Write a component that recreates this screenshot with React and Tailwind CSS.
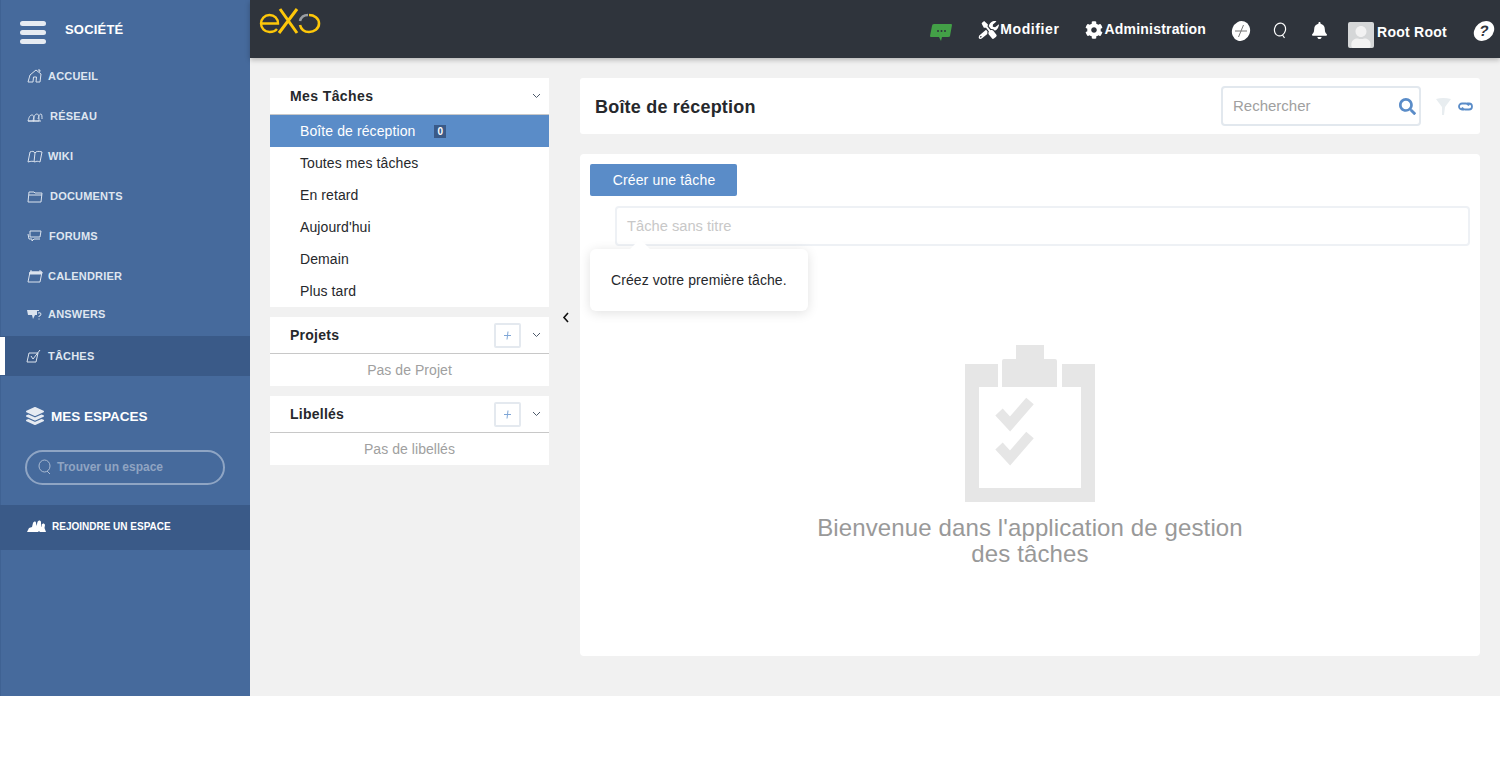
import { FaBell, FaCog, FaLayerGroup, FaSearch, FaTools, FaUser } from "react-icons/fa"

const Outline = ({ children, w = 16, h = 14 }) => (
  <svg width={w} height={h} viewBox="0 0 16 14" fill="none" stroke="currentColor" strokeWidth="1">
    {children}
  </svg>
)

const navItems = [
  {
    label: "ACCUEIL",
    gap: "gap-[5px]",
    icon: (
      <Outline>
        <path d="M1 13 3 6l6-5 5 4-1 8H9l.5-5h-3L6 13zM11 1h2l-.3 2" />
      </Outline>
    ),
  },
  {
    label: "RÉSEAU",
    gap: "gap-[7px]",
    icon: (
      <Outline w={16}>
        <path d="M1 12c1-4 2-6 4-6s2 3 2 6zM6 12c1-5 2-7 4-7s2 4 2 7zM11 10c1-4 2-5 3-5s1 3 1 5M1 12h13" />
      </Outline>
    ),
  },
  {
    label: "WIKI",
    gap: "gap-[5px]",
    icon: (
      <Outline>
        <path d="M1 13 3 3c2-1 4-1 5 1 1-2 4-2 7-1l-2 10c-2-1-4-1-5 0-2-1-4-1-7 0zM8 4l-1 9" />
      </Outline>
    ),
  },
  {
    label: "DOCUMENTS",
    gap: "gap-[7px]",
    icon: (
      <Outline>
        <path d="M1 13 2 3h5l1 1h7l-1 9zM2 6h13" />
      </Outline>
    ),
  },
  {
    label: "FORUMS",
    gap: "gap-[6px]",
    icon: (
      <Outline>
        <path d="M3 2h11l-1 6H3zM1 5l1 5h3v2l2-2h6" />
      </Outline>
    ),
  },
  {
    label: "CALENDRIER",
    gap: "gap-[5px]",
    icon: (
      <Outline>
        <path d="M1 13 3 3h12l-2 10zM4 1v2M13 1v2" />
        <path d="M3 3h12l-.5 2H2.600z" fill="currentColor" />
      </Outline>
    ),
  },
  {
    label: "ANSWERS",
    gap: "gap-[5px]",
    shift: "pb-[4px]",
    icon: (
      <svg width="16" height="11" viewBox="0 0 16 11" fill="currentColor">
        <path d="M0 1h12v1H10v4H8L6 10 5 6H1z" />
        <path d="M11 4q3-1 3 1t-2 2v1M12 9.500v1" fill="none" stroke="currentColor" />
      </svg>
    ),
  },
]

function SideRow({ item }) {
  return (
    <div className={`flex h-[40px] items-center pl-[26px] ${item.gap} ${item.shift || ""}`}>
      <span className="flex w-[16px] text-[#dbe3ee]">{item.icon}</span>
      <span className="pt-[1px] text-[11px] font-bold tracking-[0.2px] text-[#dfe6f0]">{item.label}</span>
    </div>
  )
}

function Sidebar() {
  return (
    <aside className="flex h-[696px] w-[250px] shrink-0 flex-col border-l border-[#3f6293] bg-[#466a9c]">
      <div className="flex h-[56px] items-start pl-[19px] pt-[20px]">
        <div className="flex w-[26px] flex-col gap-[4px] pt-[1px]">
          <div className="h-[5px] rounded-full bg-[#e6ebf2]"></div>
          <div className="h-[5px] rounded-full bg-[#e6ebf2]"></div>
          <div className="h-[5px] rounded-full bg-[#e6ebf2]"></div>
        </div>
        <span className="ml-[19px] text-[13px] leading-[20px] font-bold tracking-[0.2px] text-white">SOCIÉTÉ</span>
      </div>
      {navItems.map((item) => (
        <SideRow key={item.label} item={item} />
      ))}
      <div className="-ml-px flex h-[40px] items-center bg-[#3a5a88]">
        <div className="h-[38px] w-[5px] bg-white"></div>
        <div className="ml-[21px] flex items-center gap-[6px]">
          <svg width="16" height="14" viewBox="0 0 16 14" fill="none" stroke="#dbe3ee" strokeWidth="1">
            <path d="M1 13 3 4h9l-2 9zM5 7l2 3 7-9" />
          </svg>
          <span className="text-[11px] font-bold tracking-[0.2px] text-[#dfe6f0]">TÂCHES</span>
        </div>
      </div>
      <div className="flex h-[74px] items-center gap-[7px] pt-[8px] pl-[25px]">
        <FaLayerGroup className="-translate-y-[1px] text-[18px] text-[#e6ebf2]" />
        <span className="text-[13.500px] font-bold text-white">MES ESPACES</span>
      </div>
      <div className="ml-[24px] flex h-[35px] w-[200px] items-center gap-[5px] rounded-full border-2 border-[#8fa5c4] pb-[1px] pl-[10px]">
        <svg width="15" height="16" viewBox="0 0 15 16" fill="none" stroke="#a9bad2" strokeWidth="1">
          <ellipse cx="7.500" cy="7" rx="5.500" ry="6" />
          <path d="m10 12 3 3" />
        </svg>
        <span className="text-[12px] font-bold text-[#90a4c2]">Trouver un espace</span>
      </div>
      <div className="mt-[20px] -ml-px flex h-[45px] items-center gap-[5px] bg-[#3a5a88] pb-[3px] pl-[27px]">
        <svg width="20" height="12" viewBox="0 0 20 12" fill="white">
          <path d="M0 12 2 8l3-1 1-4c1-2 3-2 3 0l.5 3 1-4c1-2 3-2 3.500 0v4l1 1-.5-2c1-2 3-2 3.500 0l-.5 3 1.500 4H13l-1-1-1 1z" />
        </svg>
        <span className="text-[10px] font-bold text-white">REJOINDRE UN ESPACE</span>
      </div>
    </aside>
  )
}

function Logo() {
  return (
    <svg width="62" height="26" viewBox="0 0 62 26" fill="none">
      <path
        d="M2 15.500h17c0-5-3.500-8.500-8.500-8.500S2 11 2 15.500 5.500 24 10.500 24c3 0 6-1 7.500-3"
        stroke="#fdc70a"
        strokeWidth="2.400"
      />
      <path d="m21 1 17 24M38 1 20 25" stroke="#fdc70a" strokeWidth="3" />
      <path d="M41 13c1-4 4-6 8-6" stroke="#9a9ea3" strokeWidth="2.600" />
      <path d="M50 7c5 0 10 3 10 8.500S55 24 50 24s-8-3-9-7" stroke="#fdc70a" strokeWidth="2.600" />
    </svg>
  )
}

function TopBar() {
  return (
    <header className="relative z-10 flex h-[58px] shrink-0 bg-[#2f343c] shadow-[0_2px_5px_rgba(0,0,0,0.25)]">
      <div className="ml-[9px] pt-[8px]">
        <Logo />
      </div>
      <div className="ml-auto flex items-start text-[14px] font-bold tracking-[0.25px] text-white">
        <svg className="mt-[24px]" width="22" height="18" viewBox="0 0 22 18" fill="#43a047">
          <path d="M4 0h17q1 0 1 1l-2 11q0 1-2 1h-6l-1 4-2-4H1q-1 0-1-1L2 2q0-2 2-2z" />
          <circle cx="8" cy="7" r="1" fill="#2f343c" />
          <circle cx="11.500" cy="7" r="1" fill="#2f343c" />
          <circle cx="15" cy="7" r="1" fill="#2f343c" />
        </svg>
        <FaTools className="mt-[21px] ml-[28px] -skew-x-12 text-[18px]" />
        <span className="mt-[21px] ml-[2px] leading-[17px] tracking-[0.6px]">Modifier</span>
        <FaCog className="mt-[21px] ml-[25px] text-[18px]" />
        <span className="mt-[21px] ml-[2px] leading-[17px] tracking-[0.2px]">Administration</span>
        <svg className="mt-[21px] ml-[25px]" width="20" height="20" viewBox="0 0 20 20">
          <ellipse cx="10" cy="10" rx="9" ry="10" fill="white" transform="rotate(20 10 10)" />
          <path d="M4 10h12M12.500 4l-5 12" stroke="#777" strokeWidth="1" />
        </svg>
        <svg className="mt-[22px] ml-[21px]" width="16" height="17" viewBox="0 0 16 17" fill="none" stroke="white" strokeWidth="1.200">
          <ellipse cx="8" cy="7.500" rx="5.500" ry="6.500" transform="rotate(15 8 7.500)" />
          <path d="m10.500 13 2 3" />
        </svg>
        <FaBell className="mt-[22px] ml-[23px] text-[17px]" />
        <div className="mt-[22px] ml-[20px] flex h-[26px] w-[26px] items-end justify-center overflow-hidden rounded-[2px] bg-[#d5d7d8]">
          <FaUser className="text-[22px] text-[#f2f2f2]" />
        </div>
        <span className="mt-[24px] ml-[3px] leading-[17px]">Root Root</span>
        <div className="mt-[21px] mr-[6px] ml-[27px] flex h-[20px] w-[20px] -skew-x-12 items-center justify-center rounded-full bg-white text-[15px] font-bold text-[#2f343c]">
          ?
        </div>
      </div>
    </header>
  )
}

const Chevron = () => (
  <svg width="9" height="6" viewBox="0 0 9 6" fill="none" stroke="#4d5a6b" strokeWidth="1">
    <path d="m1 1 3.500 3.500L8 1" />
  </svg>
)

const taskFilters = ["Toutes mes tâches", "En retard", "Aujourd'hui", "Demain", "Plus tard"]

function LeftPanel() {
  return (
    <div className="flex w-[279px] shrink-0 flex-col gap-[10px]">
      <div className="bg-white">
        <div className="flex h-[37px] items-center justify-between border-b border-[#c8c8c8] pr-[8px] pl-[20px]">
          <span className="text-[14px] font-bold tracking-[0.4px] text-[#26282c]">Mes Tâches</span>
          <Chevron />
        </div>
        <div className="flex h-[32px] items-center bg-[#5a8cc8] pl-[30px] text-[14px] tracking-[0.1px] text-white">
          Boîte de réception
          <span className="ml-[19px] flex h-[13px] w-[12px] items-center justify-center bg-[#3a5a88] text-[10px] font-bold">
            0
          </span>
        </div>
        {taskFilters.map((name) => (
          <div key={name} className="flex h-[32px] items-center pl-[30px] text-[14px] tracking-[0.1px] text-[#26282c]">
            {name}
          </div>
        ))}
      </div>
      <SideSection title="Projets" empty="Pas de Projet" />
      <SideSection title="Libellés" empty="Pas de libellés" />
    </div>
  )
}

function SideSection({ title, empty }) {
  return (
    <div className="bg-white">
      <div className="flex h-[37px] items-center border-b border-[#c8c8c8] pr-[8px] pl-[20px]">
        <span className="text-[14px] font-bold tracking-[0.25px] text-[#26282c]">{title}</span>
        <div className="mr-[11px] ml-auto flex h-[25px] w-[27px] items-center justify-center rounded-[2px] border-2 border-[#e4e9ef]">
          <svg width="9" height="9" viewBox="0 0 9 9" fill="none" stroke="#7fa6d6" strokeWidth="1">
            <path d="M1 4.500h7M5 .5l-1 8" />
          </svg>
        </div>
        <Chevron />
      </div>
      <div className="flex h-[32px] items-center justify-center text-[14px] tracking-[0.05px] text-[#a0a0a0]">{empty}</div>
    </div>
  )
}

function Clipboard() {
  return (
    <svg width="130" height="157" viewBox="0 0 130 157" fill="#e6e6e6">
      <path d="M0 19h33v23h64V19h33v138H0zM14 42v101h102V42z" fillRule="evenodd" />
      <path d="M51 0h28v14h11q2 0 2 2v26H37V16q0-2 2-2h12z" />
      <path d="m34 67 11 12 20-23M34 101l11 12 20-23" fill="none" stroke="#e6e6e6" strokeWidth="10" />
    </svg>
  )
}

function MainPanel() {
  return (
    <div className="flex flex-1 flex-col gap-[20px]">
      <div className="flex h-[56px] items-center rounded-[3px] bg-white pl-[15px]">
        <h1 className="pt-[2px] text-[18px] font-bold tracking-[0.2px] text-[#26282c]">Boîte de réception</h1>
        <div className="ml-auto flex h-[40px] w-[200px] items-center justify-between rounded-[4px] border-2 border-[#e2e8ee] pr-[3px] pl-[10px] text-[15px] text-[#a0a0a0]">
          Rechercher
          <FaSearch className="text-[17px] text-[#5a8cc8]" />
        </div>
        <svg className="ml-[14px]" width="16" height="17" viewBox="0 0 16 17" fill="#e8edf0">
          <path d="M1 1q7-2 15 0l-6 8-1 8H7V9z" />
        </svg>
        <svg className="mr-[7px] ml-[7px]" width="15" height="9" viewBox="0 0 15 9" fill="none" stroke="#5a8cc8" strokeWidth="1.800">
          <path d="M6 7.500H4a3 3 0 0 1 0-6h4q2 0 3 2M9 1.500h2a3 3 0 0 1 0 6H7q-2 0-3-2" />
        </svg>
      </div>
      <div className="relative flex h-[502px] flex-col rounded-[4px] bg-white pt-[10px] pl-[10px]">
        <button className="flex h-[32px] w-[147px] items-center justify-center rounded-[2px] bg-[#5a8cc8] pl-[1px] text-[14px] tracking-[0.15px] text-white">
          Créer une tâche
        </button>
        <div className="mt-[10px] mr-[10px] ml-[25px] flex h-[40px] items-center rounded-[4px] border-2 border-[#eef1f5] pl-[10px] text-[14.700px] text-[#c8c8c8]">
          Tâche sans titre
        </div>
        <div className="absolute top-[95px] left-[10px] flex h-[62px] w-[218px] items-center rounded-[6px] bg-white pl-[21px] text-[14px] tracking-[0.08px] text-[#26282c] shadow-[0_2px_12px_rgba(0,0,0,0.12)]">
          <div className="absolute -top-[7px] left-[43px] h-[14px] w-[14px] rotate-45 bg-white"></div>
          <span className="relative">Créez votre première tâche.</span>
        </div>
        <div className="mt-[99px] -ml-[10px] flex flex-col items-center">
          <Clipboard />
          <p className="mt-[13px] w-[440px] text-center text-[24px] leading-[26px] tracking-[0.12px] text-[#999999]">
            Bienvenue dans l'application de gestion des tâches
          </p>
        </div>
      </div>
    </div>
  )
}

export default function App() {
  return (
    <div className="flex h-[696px] font-['Liberation_Sans',Arial,sans-serif]">
      <Sidebar />
      <div className="flex min-w-0 flex-1 flex-col bg-[#f1f1f1]">
        <TopBar />
        <div className="flex flex-1 pt-[20px] pr-[20px] pl-[20px]">
          <LeftPanel />
          <div className="flex w-[31px] shrink-0 justify-center pt-[234px] pl-[2px]">
            <svg width="7" height="11" viewBox="0 0 7 11" fill="none" stroke="#111" strokeWidth="1.600">
              <path d="M6 1 2 5.500 6 10" />
            </svg>
          </div>
          <MainPanel />
        </div>
      </div>
    </div>
  )
}
